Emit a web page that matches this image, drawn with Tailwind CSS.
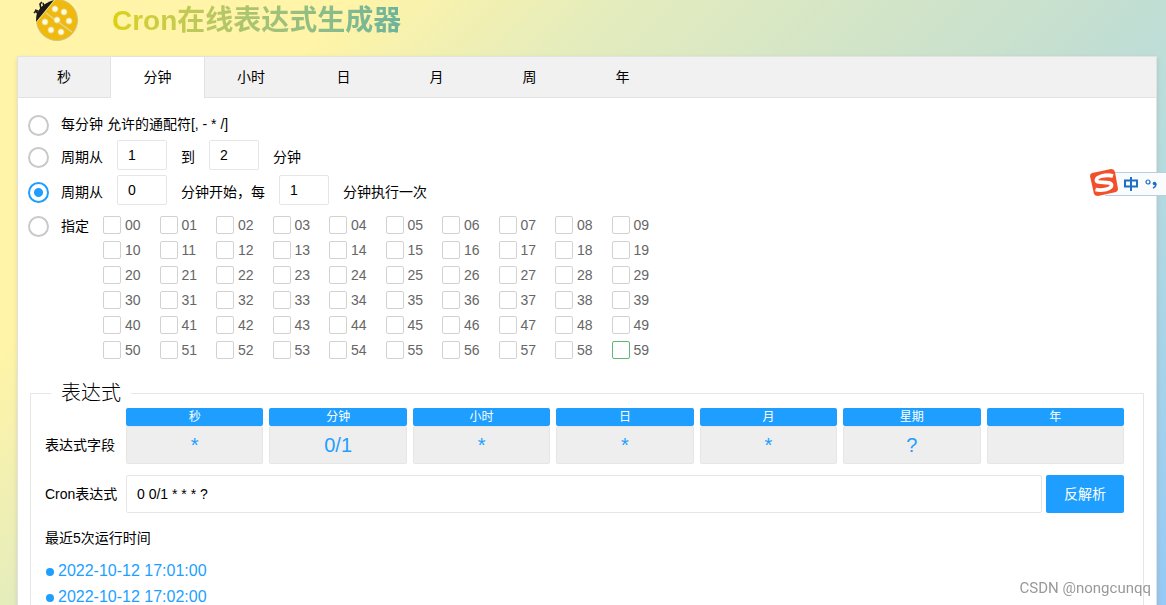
<!DOCTYPE html>
<html lang="zh-CN">
<head>
<meta charset="utf-8">
<meta name="viewport" content="width=device-width, initial-scale=1">
<title>Cron在线表达式生成器</title>
<script src="https://cdn.jsdelivr.net/npm/@tailwindcss/browser@4"></script>
</head>
<body class="flex min-h-screen flex-col bg-[linear-gradient(135deg,#fff4a7_0%,#fff4a7_20%,#e4ecbd_35%,#c5dfd0_62%,#b8dcdd_73%,#96c9f4_100%)] pr-[9px] pl-[17px] font-['Liberation_Sans','Noto_Sans_CJK_SC',sans-serif] text-sm text-black">
  <header class="flex h-14 items-start gap-8 pl-4">
    <svg class="h-[42px] w-[47px]" viewBox="0 0 47 42" aria-hidden="true">
      <circle cx="24" cy="20" r="20.5" fill="#f0b90b" stroke="#cdc48a" stroke-width="1"/>
      <path d="M0 0H22L3 23H0Z" fill="#fff4a7"/>
      <path d="M3 22 Q2 10 12 4 Q17 1 21 0 Z" fill="#1e1a17"/>
      <path d="M5 14 L3 11 L1 13 M8 9 L7 4 L9 2 M11 6 L10 3 M5 11 L2 10" fill="none" stroke="#1e1a17" stroke-width="1.6"/>
      <path d="M13 13 L39 32" stroke="#ddd9a4" stroke-width="1.2"/>
      <g fill="#fffbd5" stroke="#dfc766" stroke-width=".8">
        <circle cx="22" cy="9" r="3.2"/><circle cx="31" cy="12" r="3.2"/><circle cx="36" cy="21" r="3.2"/><circle cx="24" cy="20" r="3.2"/><circle cx="12" cy="22" r="3.2"/><circle cx="18" cy="30" r="3.2"/><circle cx="28" cy="32" r="3.2"/>
      </g>
    </svg>
    <h1 class="bg-linear-to-r from-[#ddd00c] to-[#6cb39d] bg-clip-text text-[28px] leading-[42px] font-bold text-transparent">Cron在线表达式生成器</h1>
  </header>

  <main class="flex flex-1 flex-col border border-b-0 border-[#e2e2e2] bg-white shadow-[0_2px_5px_rgba(0,0,0,0.1)]">
    <nav class="flex h-[41px] border-b border-[#e2e2e2] bg-[#f1f1f1]" role="tablist">
      <button role="tab" class="w-[92px]">秒</button>
      <button role="tab" aria-selected="true" class="-mb-px w-[95px] border-x border-[#e2e2e2] bg-white pb-px">分钟</button>
      <button role="tab" class="w-[92px]">小时</button>
      <button role="tab" class="w-[93px]">日</button>
      <button role="tab" class="w-[93px]">月</button>
      <button role="tab" class="w-[93px]">周</button>
      <button role="tab" class="w-[93px]">年</button>
    </nav>

    <form class="flex flex-1 flex-col px-3">
      <section class="-ml-0.5 flex flex-col pt-[11px]" aria-label="分钟">
        <div class="flex h-[30px] items-center gap-3">
          <input id="m1" name="mode" type="radio" class="mt-0.5 size-[21px] appearance-none rounded-full border-2 border-[#c9c9c9]">
          <label for="m1">每分钟 允许的通配符[, - * /]</label>
        </div>
        <div class="flex h-[35px] items-center">
          <input id="m2" name="mode" type="radio" class="mt-0.5 mr-3 size-[21px] appearance-none rounded-full border-2 border-[#c9c9c9]">
          <label for="m2" class="mr-3.5">周期从</label>
          <input aria-label="周期开始" value="1" class="mr-3.5 mb-1 h-[30px] w-[50px] rounded-xs border border-[#e6e6e6] pl-2.5">
          <span class="mr-3.5">到</span>
          <input aria-label="周期结束" value="2" class="mr-3.5 mb-1 h-[30px] w-[50px] rounded-xs border border-[#e6e6e6] pl-2.5">
          <span>分钟</span>
        </div>
        <div class="flex h-[35px] items-center">
          <input id="m3" name="mode" type="radio" checked class="mt-0.5 mr-3 size-[21px] appearance-none rounded-full border-2 border-[#c9c9c9] checked:border-[#1e9fff] checked:bg-[radial-gradient(circle,#1e9fff_4px,transparent_5px)]">
          <label for="m3" class="mr-3.5">周期从</label>
          <input aria-label="起始分钟" value="0" class="mr-3.5 mb-1 h-[30px] w-[50px] rounded-xs border border-[#e6e6e6] pl-2.5">
          <span class="mr-3.5">分钟开始，每</span>
          <input aria-label="间隔分钟" value="1" class="mr-3.5 mb-1 h-[30px] w-[50px] rounded-xs border border-[#e6e6e6] pl-2.5">
          <span>分钟执行一次</span>
        </div>
        <div class="flex items-start">
          <div class="flex h-[34px] w-[75px] shrink-0 items-center gap-3">
            <input id="m4" name="mode" type="radio" class="size-[21px] appearance-none rounded-full border-2 border-[#c9c9c9]">
            <label for="m4">指定</label>
          </div>
          <div id="minutes" class="grid w-[565px] grid-cols-10 pt-[3px]"></div>
        </div>
      </section>

      <fieldset class="mt-[17px] min-w-0 flex-1 border border-b-0 border-[#e6e6e6] pr-[19px] pl-3.5">
        <legend class="ml-1.5 px-2.5 text-xl leading-7 font-light">表达式</legend>
        <div class="flex pt-px">
          <span class="w-[81px] shrink-0 pt-[27px]">表达式字段</span>
          <div id="fields" class="grid flex-1 grid-cols-7 gap-1.5"></div>
        </div>
        <div class="mt-[11px] flex items-center">
          <label for="cron" class="w-[81px] shrink-0">Cron表达式</label>
          <input id="cron" value="0 0/1 * * * ?" class="mr-1 h-[38px] min-w-0 flex-1 rounded-xs border border-[#e6e6e6] pl-2.5">
          <button type="button" class="h-[38px] w-[78px] rounded-xs bg-[#1e9fff] text-white">反解析</button>
        </div>
        <h2 class="mt-[15px] leading-5">最近5次运行时间</h2>
        <ul class="mt-2.5 text-base leading-[26px] text-[#1e9fff]">
          <li class="flex items-center gap-1 pl-px before:mt-0.5 before:size-2 before:rounded-full before:bg-[#1e9fff]">2022-10-12 17:01:00</li>
          <li class="flex items-center gap-1 pl-px before:mt-0.5 before:size-2 before:rounded-full before:bg-[#1e9fff]">2022-10-12 17:02:00</li>
        </ul>
      </fieldset>
    </form>
  </main>

  <aside class="fixed top-[168px] right-0 flex h-[30px] w-[77px] items-center" aria-label="输入法">
    <div class="mt-0.5 ml-4 flex h-6 flex-1 items-center gap-1 border-y border-[#b9cfe0] bg-[#f9fbfd] pl-[18px] text-[#1c6fc4]">
      <svg class="h-4 w-4 shrink-0" viewBox="0 0 16 16" aria-label="中" role="img"><path d="M2 4.500h12v6H2zM8 1v14" fill="none" stroke="currentColor" stroke-width="2"/></svg>
      <svg class="h-4 w-4 shrink-0" viewBox="0 0 16 16" aria-hidden="true"><circle cx="5" cy="6" r="2" fill="none" stroke="currentColor" stroke-width="1.2"/><circle cx="11.500" cy="7.500" r="1.8" fill="currentColor"/><path d="M13 7.500Q13.200 10.500 10 12.200" fill="none" stroke="currentColor" stroke-width="1.4"/></svg>
    </div>
    <svg class="absolute top-0 left-0 h-[30px] w-[30px]" viewBox="0 0 30 30" aria-hidden="true">
      <path d="M3 5 Q13 3 22 1 Q25 1 26 4 L29 21 Q29 23 27 24 L9 28 Q6 28 5 26 L1 8 Q1 6 3 5Z" fill="#f1502b"/>
      <path d="M24 8 C17 6 7 8.500 7.500 12.500 C8 16 22 12.500 22.500 17 C23 21 13 23 6.500 21.500" fill="none" stroke="#fff" stroke-width="3.8"/>
    </svg>
  </aside>
  <p class="fixed right-[15px] bottom-[7px] font-[Roboto,sans-serif] text-[15px] leading-5 text-[#999]">CSDN @nongcunqq</p>

  <script>
    const minutes = document.getElementById('minutes');
    for (let i = 0; i < 60; i++) {
      const n = String(i).padStart(2, '0');
      const color = i === 59 ? 'border-[#5fb878]' : 'border-[#d2d2d2]';
      minutes.insertAdjacentHTML('beforeend',
        `<label class="flex h-[25px] items-center gap-1 text-[#666]"><input type="checkbox" value="${n}" class="size-[18px] appearance-none rounded-xs border ${color}">${n}</label>`);
    }
    const fields = document.getElementById('fields');
    [['秒', '*'], ['分钟', '0/1'], ['小时', '*'], ['日', '*'], ['月', '*'], ['星期', '?'], ['年', '']].forEach(([name, value], i) => {
      fields.insertAdjacentHTML('beforeend',
        `<div class="flex min-w-0 flex-col"><label for="f${i}" class="rounded-xs bg-[#1e9fff] text-center text-xs leading-[18px] text-white">${name}</label><input id="f${i}" value="${value}" readonly class="h-[38px] w-full rounded-xs border border-[#e6e6e6] bg-[#eee] text-center text-xl text-[#1e9fff]"></div>`);
    });
  </script>
</body>
</html>
